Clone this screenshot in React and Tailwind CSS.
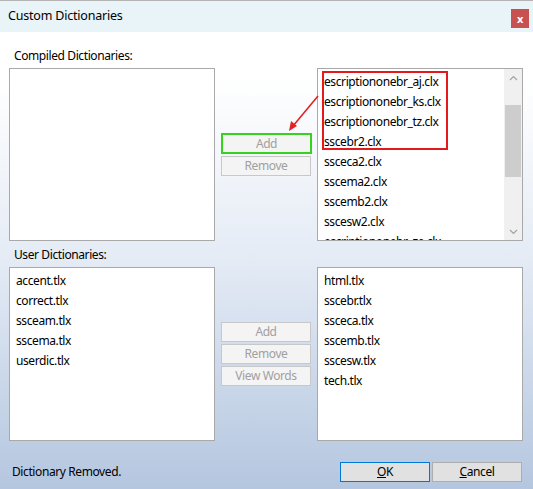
import React from 'react';

const compiled = [
  'escriptiononebr_aj.clx',
  'escriptiononebr_ks.clx',
  'escriptiononebr_tz.clx',
  'sscebr2.clx',
  'ssceca2.clx',
  'sscema2.clx',
  'sscemb2.clx',
  'sscesw2.clx',
  'escriptiononebr_ze.clx',
];

const userLeft = ['accent.tlx', 'correct.tlx', 'ssceam.tlx', 'sscema.tlx', 'userdic.tlx'];
const userRight = ['html.tlx', 'sscebr.tlx', 'ssceca.tlx', 'sscemb.tlx', 'sscesw.tlx', 'tech.tlx'];

const ListBox = ({ items = [], className = '', children }) => (
  <div className={`relative bg-white border border-[#a9a9a9] overflow-hidden ${className}`}>
    <div className="pt-[3px] pl-[6px]">
      {items.map((item) => (
        <div key={item} className="h-[20px] leading-[20px] whitespace-nowrap">
          {item}
        </div>
      ))}
    </div>
    {children}
  </div>
);

const DisabledButton = ({ label, className = '' }) => (
  <div
    className={`h-[20px] w-[90px] flex items-center justify-center bg-[#f4f4f4] border border-[#c8c8c8] text-[#a0a0a0] ${className}`}
  >
    {label}
  </div>
);

const Scrollbar = () => (
  <div className="absolute right-0 top-0 bottom-0 w-[18px] bg-[#f0f0f0] flex flex-col">
    <div className="h-[17px] flex items-center justify-center">
      <svg width="9" height="6" viewBox="0 0 9 6">
        <path d="M1 5 L4.5 1.5 L8 5" fill="none" stroke="#a3a3a3" strokeWidth="1.2" />
      </svg>
    </div>
    <div className="h-[19px]" />
    <div className="h-[72px] mx-[1px] bg-[#cdcdcd]" />
    <div className="flex-1" />
    <div className="h-[17px] flex items-center justify-center">
      <svg width="9" height="6" viewBox="0 0 9 6">
        <path d="M1 1 L4.5 4.5 L8 1" fill="none" stroke="#a3a3a3" strokeWidth="1.2" />
      </svg>
    </div>
  </div>
);

export default function App() {
  return (
    <div
      className="relative w-[533px] h-[489px] flex flex-col overflow-hidden text-[12px] tracking-[-0.4px] text-black"
      style={{ fontFamily: '"Segoe UI", "Noto Sans", "Liberation Sans", sans-serif' }}
    >
      {/* Title bar */}
      <div className="h-[32px] flex items-center justify-between bg-[#e8f4f8] border-t border-[#b4b4b4] pl-[8px] pr-[4px]">
        <span className="text-[12.5px] tracking-[-0.2px]">Custom Dictionaries</span>
        <div className="w-[18px] h-[19px] mt-[3px] bg-[#c75050] flex items-center justify-center text-white text-[11px] font-bold leading-none">
          x
        </div>
      </div>

      {/* Body */}
      <div className="flex-1 flex flex-col pt-[16px] pl-[9px] bg-linear-to-b from-white from-10% via-[#e4ebf5] via-50% to-[#b4c6df]">
        <div className="h-[16px] leading-[16px] pl-[5px] mb-[4px]">Compiled Dictionaries:</div>
        <div className="flex gap-[6px] h-[173px]">
          <ListBox className="w-[206px]" />
          <div className="w-[90px] flex flex-col justify-center gap-[2px]">
            <div className="h-[21px] w-[91px] flex items-center justify-center bg-[#f4f4f4] border-2 border-[#37d21e] text-[#a0a0a0]">
              Add
            </div>
            <DisabledButton label="Remove" />
          </div>
          <ListBox items={compiled} className="w-[206px]">
            <div className="absolute left-[4px] top-[2px] w-[126px] h-[79px] border-2 border-[#e3191c]" />
            <Scrollbar />
          </ListBox>
        </div>

        <div className="h-[16px] leading-[16px] pl-[5px] mt-[6px] mb-[4px]">User Dictionaries:</div>
        <div className="flex gap-[6px] h-[174px]">
          <ListBox items={userLeft} className="w-[206px]" />
          <div className="w-[90px] flex flex-col justify-center gap-[2px]">
            <DisabledButton label="Add" />
            <DisabledButton label="Remove" />
            <DisabledButton label="View Words" />
          </div>
          <ListBox items={userRight} className="w-[206px]" />
        </div>

        <div className="mt-[21px] flex items-center justify-between pr-[11px]">
          <span className="pl-[3px]">Dictionary Removed.</span>
          <div className="flex gap-[2px]">
            <div className="w-[90px] h-[20px] flex items-center justify-center bg-[#e1e1e1] border border-[#0078d7]">
              <span><span className="underline">O</span>K</span>
            </div>
            <div className="w-[90px] h-[20px] flex items-center justify-center bg-[#e1e1e1] border border-[#adadad]">
              <span><span className="underline">C</span>ancel</span>
            </div>
          </div>
        </div>
      </div>

      {/* Annotation arrow */}
      <svg className="absolute left-0 top-0 pointer-events-none" width="533" height="489">
        <line x1="318" y1="96" x2="293" y2="126" stroke="#e32222" strokeWidth="1.6" />
        <path d="M289 131 L291 121 L297 126 Z" fill="#e32222" />
      </svg>
    </div>
  );
}
